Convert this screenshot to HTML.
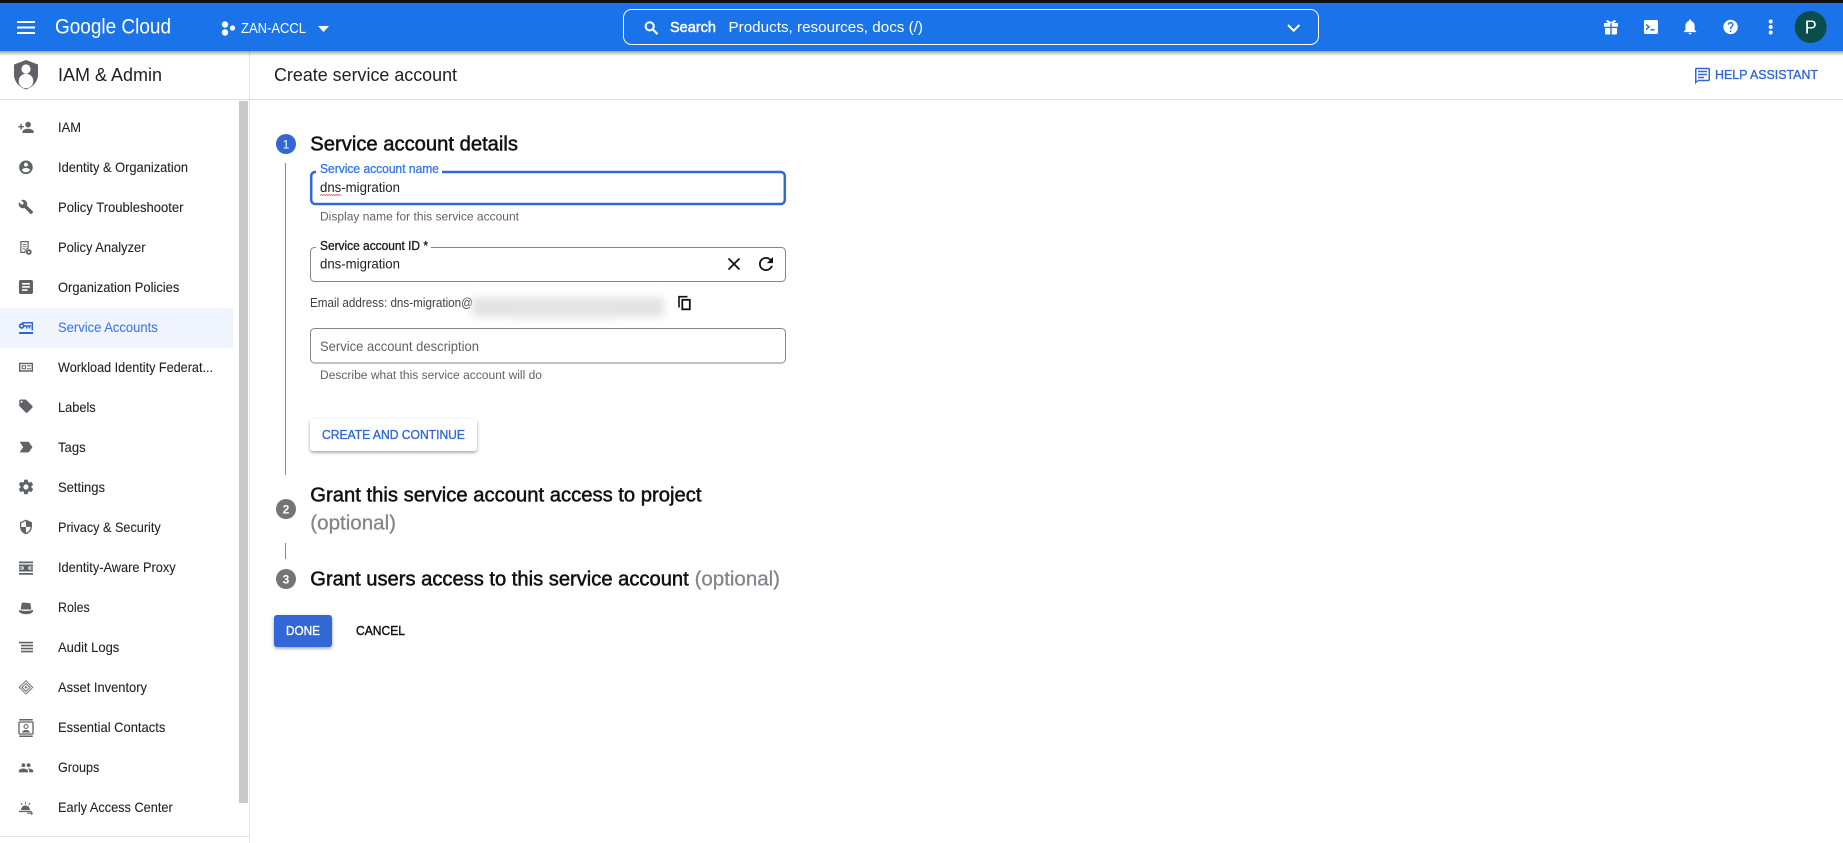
<!DOCTYPE html>
<html lang="en">
<head>
<meta charset="utf-8">
<title>Create service account</title>
<style>
html,body{margin:0;padding:0;background:#fff;width:1843px;height:843px;overflow:hidden}
svg{display:block}
text{font-family:"Liberation Sans",Arial,sans-serif}
.n{font-size:13.7px;fill:#202124;stroke:#202124;stroke-width:.08}
.h{font-size:20px;fill:#111;stroke:#111;stroke-width:.5}
.o{font-size:20px;fill:#80868b;stroke:#80868b;stroke-width:.3}
.f{font-size:13.8px;fill:#202124}
.s{font-size:12.3px;fill:#5f6368}
.i{fill:#5f6368}
.w{fill:#fff}
</style>
</head>
<body>
<svg width="1843" height="843" viewBox="0 0 1843 843" xmlns="http://www.w3.org/2000/svg">
<defs>
<linearGradient id="sh" x1="0" y1="0" x2="0" y2="1"><stop offset="0" stop-color="#000" stop-opacity=".35"/><stop offset="1" stop-color="#000" stop-opacity="0"/></linearGradient>
<filter id="bl" x="-10%" y="-50%" width="120%" height="200%"><feGaussianBlur stdDeviation="4"/></filter>
<filter id="ds" x="-10%" y="-20%" width="120%" height="160%"><feDropShadow dx="0" dy="1.5" stdDeviation="1.6" flood-color="#000" flood-opacity=".38"/></filter>
</defs>
<rect width="1843" height="843" fill="#fff"/>

<!-- sidebar chrome -->
<rect x="249" y="51" width="1" height="792" fill="#e4e4e4"/>
<rect x="0" y="99" width="1843" height="1" fill="#e0e0e0"/>
<rect x="239" y="101" width="9" height="702" fill="#c9c9c9"/>
<rect x="0" y="836" width="249" height="1" fill="#e4e4e4"/>
<rect x="0" y="308" width="233" height="40" fill="#eff4fd"/>

<!-- top bar -->
<rect x="0" y="51" width="1843" height="5" fill="url(#sh)"/>
<rect x="0" y="3" width="1843" height="48" fill="#1a73e8"/>
<rect x="0" y="0" width="1843" height="3" fill="#111"/>
<rect x="17" y="21" width="18" height="2" class="w"/><rect x="17" y="26.5" width="18" height="2" class="w"/><rect x="17" y="32" width="18" height="2" class="w"/>
<text x="55" y="33.5" textLength="116" lengthAdjust="spacingAndGlyphs" font-size="21" class="w">Google Cloud</text>
<circle cx="225" cy="24.5" r="3.2" class="w"/><circle cx="232.5" cy="28" r="2.6" class="w"/><circle cx="225" cy="32.5" r="3.2" class="w"/>
<text x="241" y="33" textLength="65" lengthAdjust="spacingAndGlyphs" font-size="15" class="w">ZAN-ACCL</text>
<path d="M318 26h11l-5.500 6z" class="w"/>
<rect x="623.500" y="9.500" width="695" height="35" rx="8" fill="none" stroke="#fff" stroke-width="1"/>
<g transform="translate(642.700,19.300) scale(.74)"><path class="w" stroke="#fff" stroke-width=".8" d="M15.500 14h-.79l-.28-.27C15.410 12.590 16 11.110 16 9.500 16 5.910 13.090 3 9.500 3S3 5.910 3 9.500 5.910 16 9.500 16c1.610 0 3.090-.59 4.230-1.570l.27.28v.79l5 4.990L20.490 19l-4.990-5zm-6 0C7.010 14 5 11.990 5 9.500S7.010 5 9.500 5 14 7.010 14 9.500 11.990 14 9.500 14z"/></g>
<text x="670" y="32" textLength="46" lengthAdjust="spacingAndGlyphs" font-size="14.500" class="w" stroke="#fff" stroke-width=".45">Search</text>
<text x="728.500" y="32" textLength="194.500" lengthAdjust="spacingAndGlyphs" font-size="14.500" class="w">Products, resources, docs (/)</text>
<path d="M1288 25l5.700 5.700 5.700-5.700" fill="none" stroke="#fff" stroke-width="2"/>

<!-- gift -->
<path class="w" d="M1604 23h6.300v3.800h-6.300zM1611.700 23h6.300v3.800h-6.300zM1605 28h5.300v6.500h-4.300a1 1 0 0 1-1-1zM1611.700 28h5.300v5.500a1 1 0 0 1-1 1h-4.300z"/>
<path d="M1606.500 20.800l4.200 2.200M1615.500 20.800l-4.200 2.200" stroke="#fff" stroke-width="2" fill="none"/>
<!-- terminal -->
<rect x="1644" y="20" width="14" height="14" rx="1.500" class="w"/>
<path d="M1646 24.500l3 2.500-3 2.500" fill="none" stroke="#1a73e8" stroke-width="1.500"/><rect x="1650.500" y="29" width="4" height="1.500" fill="#1a73e8"/>
<!-- bell -->
<g transform="translate(1680.800,17.500) scale(.77)"><path class="w" d="M12 22c1.100 0 2-.9 2-2h-4c0 1.100.89 2 2 2zm6-6v-5c0-3.070-1.640-5.640-4.500-6.320V4c0-.83-.67-1.500-1.500-1.500s-1.500.67-1.500 1.500v.68C7.630 5.360 6 7.920 6 11v5l-2 2v1h16v-1l-2-2z"/></g>
<!-- help -->
<g transform="translate(1722,18.300) scale(.72)"><path class="w" d="M12 2C6.480 2 2 6.480 2 12s4.480 10 10 10 10-4.480 10-10S17.520 2 12 2zm1 17h-2v-2h2v2zm2.070-7.750l-.9.92C13.450 12.900 13 13.500 13 15h-2v-.5c0-1.100.45-2.100 1.170-2.830l1.240-1.260c.37-.36.59-.86.59-1.410 0-1.100-.9-2-2-2s-2 .9-2 2H8c0-2.210 1.790-4 4-4s4 1.790 4 4c0 .88-.36 1.680-.93 2.250z"/></g>
<circle cx="1770.700" cy="21.500" r="2" class="w"/><circle cx="1770.700" cy="27" r="2" class="w"/><circle cx="1770.700" cy="32.500" r="2" class="w"/>
<circle cx="1810.700" cy="27" r="16" fill="#0a4d4d"/>
<text x="1810.700" y="33.500" text-anchor="middle" font-size="18" class="w">P</text>

<!-- sub header -->
<path class="i" d="M26 60l12 4.500v10c0 7-5 12.500-12 15-7-2.500-12-8-12-15v-10z"/>
<circle cx="26" cy="69" r="4.600" fill="#fff"/><circle cx="26" cy="81" r="7.300" fill="#fff"/>
<text x="58" y="81" textLength="104" lengthAdjust="spacingAndGlyphs" font-size="18" fill="#202124">IAM &amp; Admin</text>
<text x="274" y="81" textLength="183" lengthAdjust="spacingAndGlyphs" font-size="18" fill="#202124">Create service account</text>
<g transform="translate(1693.500,66.200) scale(.75)"><path fill="#3367d6" d="M20 2H4c-1.100 0-2 .9-2 2v20l4-4h14c1.100 0 2-.9 2-2V4c0-1.100-.9-2-2-2zm0 16H6l-2 2V4h16v14zM6 6h12v2H6zM6 10h12v2H6zM6 14h8v2H6z"/></g>
<text x="1715" y="79" textLength="103" lengthAdjust="spacingAndGlyphs" font-size="12.800" fill="#3367d6" stroke="#3367d6" stroke-width=".35">HELP ASSISTANT</text>

<!-- nav text -->
<text class="n" x="58" y="132" textLength="23" lengthAdjust="spacingAndGlyphs">IAM</text>
<text class="n" x="58" y="172" textLength="130" lengthAdjust="spacingAndGlyphs">Identity &amp; Organization</text>
<text class="n" x="58" y="212" textLength="125.500" lengthAdjust="spacingAndGlyphs">Policy Troubleshooter</text>
<text class="n" x="58" y="252" textLength="87.500" lengthAdjust="spacingAndGlyphs">Policy Analyzer</text>
<text class="n" x="58" y="292" textLength="121.300" lengthAdjust="spacingAndGlyphs">Organization Policies</text>
<text class="n" x="58" y="332" textLength="99.700" lengthAdjust="spacingAndGlyphs" style="fill:#3b78e7;stroke:#3b78e7">Service Accounts</text>
<text class="n" x="58" y="372" textLength="155" lengthAdjust="spacingAndGlyphs">Workload Identity Federat...</text>
<text class="n" x="58" y="412" textLength="37.700" lengthAdjust="spacingAndGlyphs">Labels</text>
<text class="n" x="58" y="452" textLength="27.700" lengthAdjust="spacingAndGlyphs">Tags</text>
<text class="n" x="58" y="492" textLength="47" lengthAdjust="spacingAndGlyphs">Settings</text>
<text class="n" x="58" y="532" textLength="102.700" lengthAdjust="spacingAndGlyphs">Privacy &amp; Security</text>
<text class="n" x="58" y="572" textLength="117.700" lengthAdjust="spacingAndGlyphs">Identity-Aware Proxy</text>
<text class="n" x="58" y="612" textLength="31.700" lengthAdjust="spacingAndGlyphs">Roles</text>
<text class="n" x="58" y="652" textLength="61.300" lengthAdjust="spacingAndGlyphs">Audit Logs</text>
<text class="n" x="58" y="692" textLength="89" lengthAdjust="spacingAndGlyphs">Asset Inventory</text>
<text class="n" x="58" y="732" textLength="107.300" lengthAdjust="spacingAndGlyphs">Essential Contacts</text>
<text class="n" x="58" y="772" textLength="41.300" lengthAdjust="spacingAndGlyphs">Groups</text>
<text class="n" x="58" y="812" textLength="114.700" lengthAdjust="spacingAndGlyphs">Early Access Center</text>

<!-- nav icons -->
<g class="i">
<g transform="translate(17.600,119) scale(.7)"><path d="M15 12c2.210 0 4-1.790 4-4s-1.790-4-4-4-4 1.790-4 4 1.790 4 4 4zm-9-2V7H4v3H1v2h3v3h2v-3h3v-2H6zm9 4c-2.670 0-8 1.340-8 4v2h16v-2c0-2.660-5.330-4-8-4z"/></g>
<g transform="translate(17.800,159.200) scale(.68)"><path d="M12 2C6.480 2 2 6.480 2 12s4.480 10 10 10 10-4.480 10-10S17.520 2 12 2zm0 3c1.660 0 3 1.340 3 3s-1.340 3-3 3-3-1.340-3-3 1.340-3 3-3zm0 14.200c-2.500 0-4.710-1.280-6-3.220.03-1.990 4-3.080 6-3.080 1.990 0 5.970 1.090 6 3.080-1.290 1.940-3.500 3.220-6 3.220z"/></g>
<g transform="translate(18,199) scale(.66)"><path d="M22.700 19l-9.100-9.100c.9-2.300.4-5-1.500-6.900-2-2-5-2.400-7.400-1.300L9 6 6 9 1.600 4.700C.4 7.100.9 10.100 2.900 12.100c1.900 1.900 4.600 2.400 6.900 1.500l9.100 9.100c.4.400 1 .4 1.400 0l2.300-2.300c.5-.4.5-1.100.1-1.400z"/></g>
<!-- analyzer -->
<path fill-rule="evenodd" d="M20.300 241h8.400v7.500a3.800 3.800 0 0 0-3.200 4.500h-5.200zm1.200 1.200v9.600h3v-.1a4.500 4.500 0 0 1 3-3.800v-5.700z"/>
<path d="M22.500 244h4v.9h-4zM22.500 246.200h4v.9h-4zM22.500 248.400h2.500v.9h-2.500z"/>
<circle cx="28.800" cy="252" r="2.900"/><circle cx="28.800" cy="252" r="1" fill="#fff"/>
<g transform="translate(16.600,277.600) scale(.78)"><path d="M19 3H5c-1.100 0-2 .9-2 2v14c0 1.100.9 2 2 2h14c1.100 0 2-.9 2-2V5c0-1.100-.9-2-2-2zm-5 14H7v-2h7v2zm3-4H7v-2h10v2zm0-4H7V7h10v2z"/></g>
<!-- workload -->
<path fill-rule="evenodd" d="M19 362.700h14v9H19zm1.400 1.400v6.200h11.200v-6.200z"/>
<path fill-rule="evenodd" d="M21.700 365.200h4.300v4h-4.300zm1 1v2h2.300v-2z"/>
<path d="M27 365.200h3.800v1H27zM27 368.200h3.800v1H27z"/>
<g transform="translate(17.900,398.100) scale(.67)"><path d="M21.410 11.580l-9-9C12.050 2.220 11.550 2 11 2H4c-1.100 0-2 .9-2 2v7c0 .55.22 1.050.59 1.420l9 9c.36.36.86.58 1.410.58.55 0 1.050-.22 1.410-.59l7-7c.37-.36.59-.86.59-1.410 0-.55-.23-1.060-.59-1.420zM5.500 7C4.670 7 4 6.330 4 5.500S4.670 4 5.500 4 7 4.670 7 5.500 6.330 7 5.500 7z"/></g>
<g transform="translate(16.900,438) scale(.76)"><path d="M3.500 18.990l11 .01c.67 0 1.270-.33 1.630-.84L20.500 12l-4.370-6.160c-.36-.51-.96-.84-1.630-.84l-11 .01L8.340 12 3.500 18.990z"/></g>
<g transform="translate(17.200,478.200) scale(.73)"><path d="M19.430 12.980c.04-.32.07-.64.07-.98s-.03-.66-.07-.98l2.110-1.650c.19-.15.24-.42.12-.64l-2-3.460c-.12-.22-.39-.3-.61-.22l-2.490 1c-.52-.4-1.080-.73-1.690-.98l-.38-2.650C14.460 2.180 14.250 2 14 2h-4c-.25 0-.46.18-.49.42l-.38 2.650c-.61.25-1.170.59-1.690.98l-2.490-1c-.23-.09-.49 0-.61.22l-2 3.460c-.13.22-.07.49.12.64l2.110 1.650c-.04.32-.07.65-.07.98s.03.66.07.98l-2.110 1.650c-.19.15-.24.42-.12.64l2 3.460c.12.22.39.3.61.22l2.490-1c.52.4 1.080.73 1.690.98l.38 2.650c.03.24.24.42.49.42h4c.25 0 .46-.18.49-.42l.38-2.650c.61-.25 1.170-.59 1.690-.98l2.490 1c.23.09.49 0 .61-.22l2-3.460c.12-.22.07-.49-.12-.64l-2.110-1.650zM12 15.500c-1.930 0-3.500-1.570-3.500-3.500s1.570-3.500 3.500-3.500 3.500 1.570 3.500 3.500-1.570 3.500-3.500 3.500z"/></g>
<g transform="translate(17.900,518.900) scale(.67)"><path d="M12 1L3 5v6c0 5.550 3.840 10.740 9 12 5.160-1.260 9-6.450 9-12V5l-9-4zm0 10.990h7c-.53 4.120-3.280 7.790-7 8.940V12H5V6.300l7-3.110v8.800z"/></g>
<!-- IAP -->
<path d="M19 561.500h14v1.700H19zM19 573h14v1.700H19zM19 564.500h4.500v2H19zM28.500 564.500H33v2h-4.500zM19 569.500h4.500v2H19zM28.500 569.500H33v2h-4.500zM23.500 564.500h5v7h-5zM19 567.300h3v1.500h-3zM30 567.300h3v1.500h-3z"/>
<!-- roles hat -->
<path d="M21.500 604c.4-1.800 2.200-1.800 4.500-1.200s4.100-.6 4.500 1.200l.8 5.500H20.700zM19 610c4.500 1.200 9.500 1.200 14 0v1.800c-1.500 1.600-3.500 2.400-7 2.400s-5.500-.8-7-2.400z"/>
<!-- audit -->
<path d="M19 641.700h14v1.700H19zM21 644.700h12v1.700H21zM21 647.700h12v1.700H21zM21 650.700h12v1.700H21z"/>
<!-- asset -->
<g fill="none" stroke="#707478" stroke-width="1"><path d="M26 680.700l6.700 6.700-6.700 6.700-6.700-6.700z"/><path d="M26 683.400l4 4-4 4-4-4z"/></g><path d="M26 685.900l1.500 1.500-1.500 1.500-1.500-1.500z" fill="#707478"/>
<!-- essential contacts -->
<path d="M19.300 719h13.400v1.500H19.300zM19.300 735.500h13.400v1.500H19.300z"/><rect x="19" y="722" width="14" height="12" rx="1" fill="none" stroke="#5f6368" stroke-width="1.300"/><circle cx="26" cy="726.500" r="2" fill="none" stroke="#5f6368" stroke-width="1.100"/><path d="M22 732.500c.5-2 2.500-2.500 4-2.500s3.500.5 4 2.500z"/>
<g transform="translate(18.200,760) scale(.65)"><path d="M16 11c1.660 0 2.990-1.340 2.990-3S17.660 5 16 5c-1.660 0-3 1.340-3 3s1.340 3 3 3zm-8 0c1.660 0 2.990-1.340 2.990-3S9.660 5 8 5C6.340 5 5 6.340 5 8s1.340 3 3 3zm0 2c-2.330 0-7 1.170-7 3.500V19h14v-2.500c0-2.330-4.670-3.500-7-3.500zm8 0c-.29 0-.62.02-.97.05 1.160.84 1.970 1.970 1.970 3.450V19h6v-2.500c0-2.330-4.670-3.500-7-3.500z"/></g>
<!-- early access -->
<path d="M21 810c.2-3 2.200-4.500 4.500-4.500s4.300 1.500 4.500 4.500zM19 810.700h12.500v1.400H19z"/><path d="M25.100 801.700h.9v2.700h-.9zM20.500 803.300l.8-.6 1.500 2-.8.6zM30.500 803.300l-.8-.6-1.500 2 .8.6z"/><path d="M27 812.600h4v-1.300l2.200 1.900-2.200 1.900v-1.300h-4z"/>
</g>
<!-- service accounts icon -->
<g fill="#3367d6"><path d="M22 322h11v8.500h-1.500v-7H22z"/><circle cx="21.700" cy="326" r="2.900"/><circle cx="21.700" cy="326" r="1.100" fill="#eff4fd"/><path d="M24 325.200h7v1.500h-.9v1.800h-1.400v-1.800h-1.200v1.800h-1.400v-1.800H24z"/><rect x="19" y="332" width="14" height="2"/></g>

<!-- stepper -->
<rect x="285" y="163" width="1" height="312" fill="#80868b"/>
<rect x="285" y="543" width="1" height="16" fill="#80868b"/>
<circle cx="286" cy="144" r="10" fill="#3367d6"/><text x="286" y="148.500" text-anchor="middle" font-size="12" class="w">1</text>
<circle cx="286" cy="509" r="10" fill="#757575"/><text x="286" y="513.500" text-anchor="middle" font-size="12" font-weight="bold" class="w">2</text>
<circle cx="286" cy="579" r="10" fill="#757575"/><text x="286" y="583.500" text-anchor="middle" font-size="12" font-weight="bold" class="w">3</text>
<text class="h" x="310.300" y="150.500" textLength="207.700" lengthAdjust="spacingAndGlyphs">Service account details</text>
<text class="h" x="310.300" y="501.500" textLength="391.200" lengthAdjust="spacingAndGlyphs">Grant this service account access to project</text>
<text class="o" x="310.300" y="529.500" textLength="85.700" lengthAdjust="spacingAndGlyphs">(optional)</text>
<text class="h" x="310.300" y="585.500" textLength="378.400" lengthAdjust="spacingAndGlyphs">Grant users access to this service account</text>
<text class="o" x="694.600" y="585.500" textLength="85.400" lengthAdjust="spacingAndGlyphs">(optional)</text>

<!-- field 1 -->
<rect x="311.200" y="172" width="473.600" height="32" rx="4" fill="none" stroke="#3367d6" stroke-width="2.500"/>
<rect x="316" y="166" width="126" height="10" fill="#fff"/>
<text x="320" y="173" textLength="119" lengthAdjust="spacingAndGlyphs" font-size="12.500" fill="#3b78e7" stroke="#3b78e7" stroke-width=".35">Service account name</text>
<text class="f" x="320" y="192" textLength="80" lengthAdjust="spacingAndGlyphs">dns-migration</text>
<path d="M320 195.500l1.250-1 1.250 1 1.250-1 1.250 1 1.250-1 1.250 1 1.250-1 1.250 1 1.250-1 1.250 1 1.250-1 1.250 1 1.250-1 1.250 1 1.250-1 1.250 1 1.250-1" fill="none" stroke="#e8433a" stroke-width=".7"/>
<text class="s" x="320" y="220.500" textLength="199" lengthAdjust="spacingAndGlyphs">Display name for this service account</text>

<!-- field 2 -->
<rect x="310.500" y="247.500" width="475" height="34" rx="4" fill="none" stroke="#80868b" stroke-width="1"/>
<rect x="316" y="243" width="115" height="10" fill="#fff"/>
<text x="320" y="250" textLength="108" lengthAdjust="spacingAndGlyphs" font-size="12.500" fill="#202124" stroke="#202124" stroke-width=".35">Service account ID *</text>
<text class="f" x="320" y="268.500" textLength="80" lengthAdjust="spacingAndGlyphs">dns-migration</text>
<g transform="translate(723.500,253.500) scale(.875)"><path d="M19 6.410L17.590 5 12 10.590 6.410 5 5 6.410 10.590 12 5 17.590 6.410 19 12 13.410 17.590 19 19 17.590 13.410 12z" fill="#111"/></g>
<g transform="translate(755.500,253.500) scale(.875)"><path d="M17.650 6.350C16.200 4.900 14.210 4 12 4c-4.420 0-7.990 3.580-7.990 8s3.570 8 7.990 8c3.730 0 6.840-2.550 7.730-6h-2.080c-.82 2.330-3.040 4-5.650 4-3.310 0-6-2.690-6-6s2.690-6 6-6c1.660 0 3.140.69 4.220 1.780L13 11h7V4l-2.350 2.350z" fill="#111"/></g>

<!-- email -->
<text x="310" y="307" textLength="163" lengthAdjust="spacingAndGlyphs" font-size="13" fill="#3c4043">Email address: dns-migration@</text>
<g filter="url(#bl)"><rect x="472" y="297" width="192" height="20" fill="#e3e3e3"/><rect x="510" y="312" width="110" height="7" fill="#e8e8e8"/></g>
<path d="M679 307.500v-10.800h8.500" fill="none" stroke="#111" stroke-width="1.600"/><rect x="682.300" y="299.800" width="7.500" height="9.500" fill="none" stroke="#111" stroke-width="1.800"/>

<!-- field 3 -->
<rect x="310.500" y="328.500" width="475" height="34.500" rx="4" fill="none" stroke="#80868b" stroke-width="1"/>
<text x="320" y="351" textLength="159" lengthAdjust="spacingAndGlyphs" font-size="13.800" fill="#5f6368">Service account description</text>
<text class="s" x="320" y="379" textLength="222" lengthAdjust="spacingAndGlyphs">Describe what this service account will do</text>

<!-- buttons -->
<rect x="310" y="419" width="167" height="32" rx="3" fill="#fff" filter="url(#ds)"/>
<text x="322" y="439" textLength="143" lengthAdjust="spacingAndGlyphs" font-size="12.800" fill="#3367d6" stroke="#3367d6" stroke-width=".35">CREATE AND CONTINUE</text>
<rect x="274" y="615" width="58" height="32" rx="3" fill="#3367d6" filter="url(#ds)"/>
<text x="286" y="635" textLength="34" lengthAdjust="spacingAndGlyphs" font-size="12.800" fill="#fff" stroke="#fff" stroke-width=".35">DONE</text>
<text x="356" y="635" textLength="49" lengthAdjust="spacingAndGlyphs" font-size="12.800" fill="#111" stroke="#111" stroke-width=".4">CANCEL</text>
</svg>
</body>
</html>
